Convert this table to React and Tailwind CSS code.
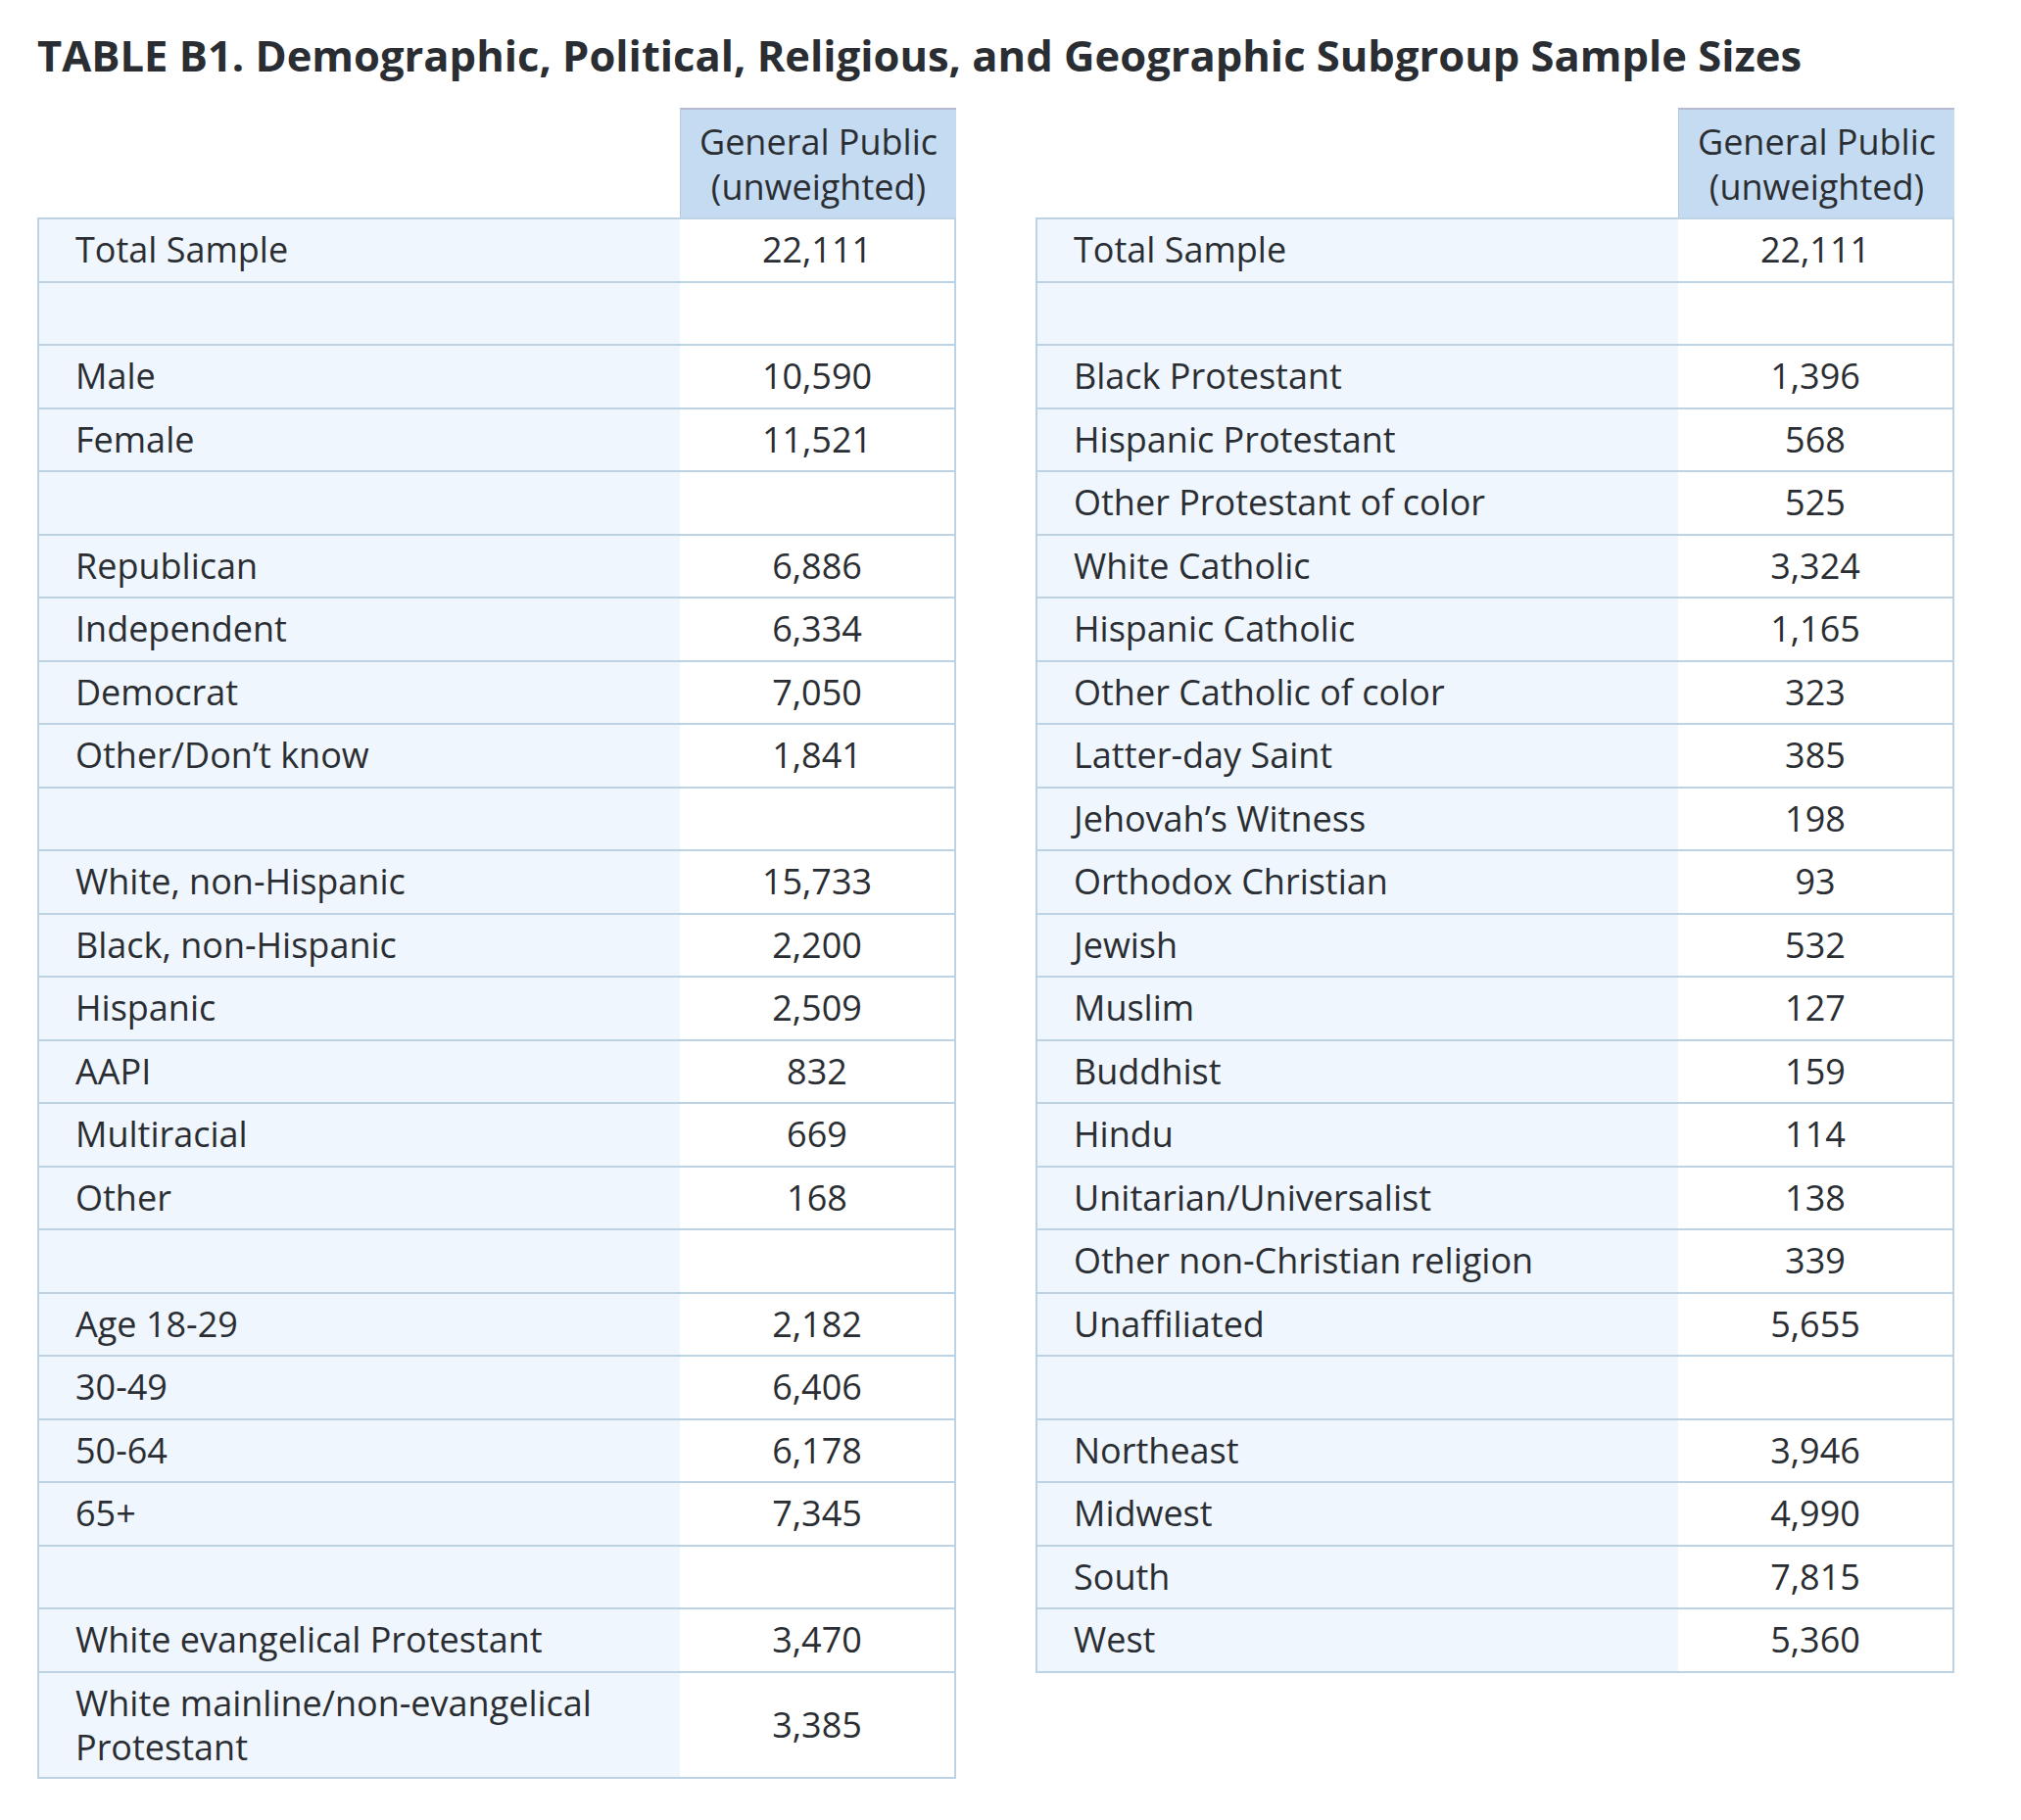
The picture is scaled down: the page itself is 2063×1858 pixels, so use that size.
import React from 'react';

const LEFT_ROWS = [
  ['Total Sample', '22,111'],
  null,
  ['Male', '10,590'],
  ['Female', '11,521'],
  null,
  ['Republican', '6,886'],
  ['Independent', '6,334'],
  ['Democrat', '7,050'],
  ['Other/Don’t know', '1,841'],
  null,
  ['White, non-Hispanic', '15,733'],
  ['Black, non-Hispanic', '2,200'],
  ['Hispanic', '2,509'],
  ['AAPI', '832'],
  ['Multiracial', '669'],
  ['Other', '168'],
  null,
  ['Age 18-29', '2,182'],
  ['30-49', '6,406'],
  ['50-64', '6,178'],
  ['65+', '7,345'],
  null,
  ['White evangelical Protestant', '3,470'],
  ['White mainline/non-evangelical Protestant', '3,385'],
];

const RIGHT_ROWS = [
  ['Total Sample', '22,111'],
  null,
  ['Black Protestant', '1,396'],
  ['Hispanic Protestant', '568'],
  ['Other Protestant of color', '525'],
  ['White Catholic', '3,324'],
  ['Hispanic Catholic', '1,165'],
  ['Other Catholic of color', '323'],
  ['Latter-day Saint', '385'],
  ['Jehovah’s Witness', '198'],
  ['Orthodox Christian', '93'],
  ['Jewish', '532'],
  ['Muslim', '127'],
  ['Buddhist', '159'],
  ['Hindu', '114'],
  ['Unitarian/Universalist', '138'],
  ['Other non-Christian religion', '339'],
  ['Unaffiliated', '5,655'],
  null,
  ['Northeast', '3,946'],
  ['Midwest', '4,990'],
  ['South', '7,815'],
  ['West', '5,360'],
];

function Row({ row }) {
  const [label, value] = row || ['', ''];
  const tall = label.length > 32;
  return (
    <div
      className={
        'flex border-b-2 border-[#bdd3e3] ' + (tall ? 'min-h-[108px] leading-[45px]' : 'h-[64.5px]')
      }
    >
      <div className="flex flex-1 items-center bg-[#f0f6fd] py-[8px] pl-[37px] pr-[40px]">{label}</div>
      <div className="flex w-[280px] items-center justify-center bg-white">{value}</div>
    </div>
  );
}

function SampleTable({ rows }) {
  return (
    <div className="w-[938px]">
      <div className="flex justify-end">
        <div className="w-[282px] border-t-2 border-l border-t-[#b6bad3] border-l-[#bcc6dd] bg-[#c5dbf1] pt-[10px] pb-[8px] text-center leading-[46px]">
          General Public
          <br />
          (unweighted)
        </div>
      </div>
      <div className="border-x-2 border-t-2 border-[#bdd3e3]">
        {rows.map((row, i) => (
          <Row key={i} row={row} />
        ))}
      </div>
    </div>
  );
}

export default function App() {
  return (
    <div className="min-h-[1858px] bg-white pl-[38px] pt-[27px] font-['Open_Sans',sans-serif] text-[36px] leading-[48px] text-[#2a2e33]">
      <h1 className="mb-[23px] text-[43.5px] font-bold leading-[60px]">
        TABLE B1. Demographic, Political, Religious, and Geographic Subgroup Sample Sizes
      </h1>
      <div className="flex items-start gap-[81px]">
        <SampleTable rows={LEFT_ROWS} />
        <SampleTable rows={RIGHT_ROWS} />
      </div>
    </div>
  );
}
